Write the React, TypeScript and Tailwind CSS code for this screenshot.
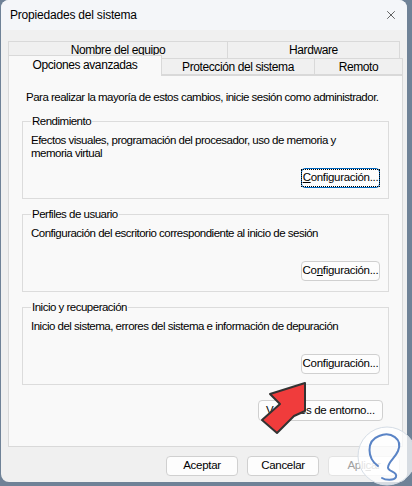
import { X } from "lucide-react";

const font = { fontFamily: '"Liberation Sans", Arial, sans-serif' };

function Btn({
  children,
  focused,
  disabled,
  className = "",
}: {
  children: React.ReactNode;
  focused?: boolean;
  disabled?: boolean;
  className?: string;
}) {
  return (
    <div
      className={
        "flex items-center justify-center rounded-[4px] border bg-[#fdfdfd] text-[11.5px] leading-none tracking-[-0.3px] " +
        (focused ? "border-[#0067c0] " : "border-[#d0d0d0] ") +
        (disabled ? "text-[#a0a0a0] " : "text-black ") +
        className
      }
    >
      {focused ? (
        <span className="border border-dotted border-black px-[1px] py-[2px]">{children}</span>
      ) : (
        children
      )}
    </div>
  );
}

function Group({
  title,
  lines,
  accel,
  focused,
}: {
  title: string;
  lines: string[];
  accel: React.ReactNode;
  focused?: boolean;
}) {
  return (
    <fieldset className="mx-[13px] border border-[#dcdcdc] px-[8px] pb-[10px]">
      <legend className="px-[1px] leading-[14px]">{title}</legend>
      <div className="h-[40px] pt-[6px] whitespace-nowrap leading-[12.5px]">
        {lines.map((l) => (
          <div key={l}>{l}</div>
        ))}
      </div>
      <div className="flex justify-end">
        <Btn focused={focused} className="h-[20px] w-[79px]">
          {accel}
        </Btn>
      </div>
    </fieldset>
  );
}

export default function App() {
  return (
    <div className="relative h-[486px] w-[412px] overflow-hidden bg-[#6f8297]" style={font}>
      <div className="ml-[1px] flex h-[482px] w-[406px] flex-col overflow-hidden rounded-[8px] bg-[#f0f0f0]">
        {/* title bar */}
        <div className="flex h-[30px] items-center justify-between bg-[#f4f6f9] pl-[9px] pr-[9px]">
          <span className="text-[12px] tracking-[-0.2px] text-black">Propiedades del sistema</span>
          <X className="h-[14px] w-[14px] text-[#222]" strokeWidth={1.2} />
        </div>

        <div className="flex flex-1 flex-col px-[7px] pt-[11px]">
          {/* tabs */}
          <div className="flex h-[17px] w-[392px] text-[12px] leading-none tracking-[-0.4px]">
            <div className="flex w-[220px] items-center justify-center border border-b-0 border-[#d9d9d9] bg-[#f0f0f0]">
              Nombre del equipo
            </div>
            <div className="flex flex-1 items-center justify-center border border-b-0 border-l-0 border-[#d9d9d9] bg-[#f0f0f0]">
              Hardware
            </div>
          </div>
          <div className="flex h-[17px] w-[395px] text-[12px] leading-none tracking-[-0.4px]">
            <div className="relative z-10 -mt-[3px] flex h-[21px] w-[154px] items-center justify-center border border-b-0 border-[#d9d9d9] bg-[#f9f9f9] pb-[3px]">
              Opciones avanzadas
            </div>
            <div className="flex w-[153px] items-center justify-center border border-l-0 border-[#d9d9d9]">
              Protección del sistema
            </div>
            <div className="flex flex-1 items-center justify-center border border-l-0 border-[#d9d9d9]">
              Remoto
            </div>
          </div>

          {/* panel */}
          <div className="flex h-[372px] w-[395px] flex-col border border-t-0 border-[#d9d9d9] bg-[#f9f9f9] text-[11.5px] tracking-[-0.5px] text-black">
            <div className="border-t border-[#d9d9d9]" />
            <p className="mt-[15px] whitespace-nowrap pl-[17px] leading-[13px]">
              Para realizar la mayoría de estos cambios, inicie sesión como administrador.
            </p>
            <div className="mt-[10px] flex flex-col gap-[8px]">
              <Group
                title="Rendimiento"
                lines={[
                  "Efectos visuales, programación del procesador, uso de memoria y",
                  "memoria virtual",
                ]}
                focused
                accel={
                  <>
                    <span className="underline">C</span>onfiguración...
                  </>
                }
              />
              <Group
                title="Perfiles de usuario"
                lines={["Configuración del escritorio correspondiente al inicio de sesión"]}
                accel={
                  <>
                    Co<span className="underline">n</span>figuración...
                  </>
                }
              />
              <Group
                title="Inicio y recuperación"
                lines={["Inicio del sistema, errores del sistema e información de depuración"]}
                accel={
                  <>
                    Confi<span className="underline">g</span>uración...
                  </>
                }
              />
            </div>
            <div className="mt-[15px] flex justify-end pr-[19px]">
              <Btn className="h-[21px] w-[125px]">
                <span className="underline">V</span>ariables de entorno...
              </Btn>
            </div>
          </div>

          {/* bottom buttons */}
          <div className="mt-[9px] flex justify-end gap-[9px]">
            <Btn className="h-[20px] w-[72px]">Aceptar</Btn>
            <Btn className="h-[20px] w-[72px]">Cancelar</Btn>
            <Btn disabled className="h-[20px] w-[72px] border-[#e3e3e3]">
              Apli<span className="underline">c</span>ar
            </Btn>
          </div>
        </div>
      </div>

      {/* red arrow annotation and watermark */}
      <svg className="absolute left-0 top-0" width="412" height="486" viewBox="0 0 412 486">
        <polygon
          points="305,383 270,394 280,404 262,420 277,433 294,416 305,411"
          fill="#f03c3c"
          stroke="#333"
          strokeWidth="2"
          strokeLinejoin="round"
        />
        <circle cx="387" cy="456" r="29" fill="#ffffff" fillOpacity="0.72" stroke="#d5dde6" strokeWidth="1" />
        <path
          d="M 378 466 C 367 458, 366 441, 379 436 C 391 431, 403 439, 398 451 C 395 458, 389 461, 388 467 C 387 472, 398 471, 396 477 C 394 481, 385 480, 382 478"
          fill="none"
          stroke="#5a84c6"
          strokeWidth="2"
          strokeLinecap="round"
        />
      </svg>
    </div>
  );
}
